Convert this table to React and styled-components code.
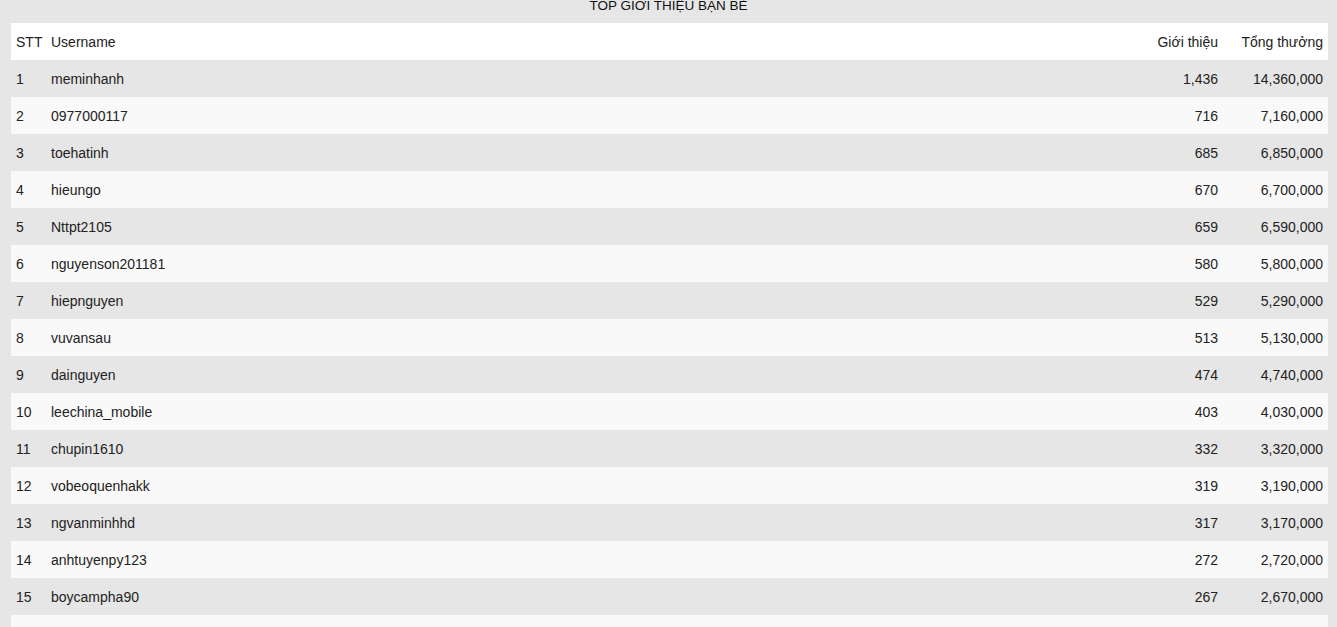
import React from 'react'
import styled, { createGlobalStyle } from 'styled-components'

const GlobalStyle = createGlobalStyle`
  html, body {
    margin: 0;
    padding: 0;
    background: #e6e6e6;
    font-family: 'Liberation Sans', Arial, sans-serif;
    color: #222;
  }
`

const Page = styled.div`
  padding: 0 9px 0 11px;
`

const Title = styled.div`
  height: 23px;
  line-height: 11px;
  font-size: 13.5px;
  text-align: center;
  text-transform: uppercase;
  color: #111;
  margin: 0 -9px 0 -11px;
  overflow: hidden;
`

const Table = styled.table`
  width: 100%;
  border-collapse: collapse;
  table-layout: fixed;
  font-size: 14px;
`

const Row = styled.tr`
  background: ${p => (p.head ? '#ffffff' : p.odd ? '#e6e6e6' : '#f9f9f9')};
`

const Cell = styled.td`
  height: 37px;
  padding: 0 5px;
  box-sizing: border-box;
  vertical-align: middle;
  text-align: ${p => (p.right ? 'right' : 'left')};
  white-space: nowrap;
  font-weight: normal;
  color: #222;
`

const data = [
  ['meminhanh', 1436, 14360000],
  ['0977000117', 716, 7160000],
  ['toehatinh', 685, 6850000],
  ['hieungo', 670, 6700000],
  ['Nttpt2105', 659, 6590000],
  ['nguyenson201181', 580, 5800000],
  ['hiepnguyen', 529, 5290000],
  ['vuvansau', 513, 5130000],
  ['dainguyen', 474, 4740000],
  ['leechina_mobile', 403, 4030000],
  ['chupin1610', 332, 3320000],
  ['vobeoquenhakk', 319, 3190000],
  ['ngvanminhhd', 317, 3170000],
  ['anhtuyenpy123', 272, 2720000],
  ['boycampha90', 267, 2670000],
]

const fmt = n => n.toLocaleString('en-US')

const App = () => (
  <>
    <GlobalStyle />
    <Page>
      <Title>Top giới thiệu bạn bè</Title>
      <Table>
        <colgroup>
          <col style={{ width: 35 }} />
          <col />
          <col style={{ width: 71 }} />
          <col style={{ width: 105 }} />
        </colgroup>
        <thead>
          <Row head>
            <Cell as="th">STT</Cell>
            <Cell as="th">Username</Cell>
            <Cell as="th" right>Giới thiệu</Cell>
            <Cell as="th" right>Tổng thưởng</Cell>
          </Row>
        </thead>
        <tbody>
          {data.map(([name, refs, total], i) => (
            <Row key={name} odd={i % 2 === 0}>
              <Cell>{i + 1}</Cell>
              <Cell>{name}</Cell>
              <Cell right>{fmt(refs)}</Cell>
              <Cell right>{fmt(total)}</Cell>
            </Row>
          ))}
          <Row>
            <Cell />
            <Cell />
            <Cell />
            <Cell />
          </Row>
        </tbody>
      </Table>
    </Page>
  </>
)

export default App
